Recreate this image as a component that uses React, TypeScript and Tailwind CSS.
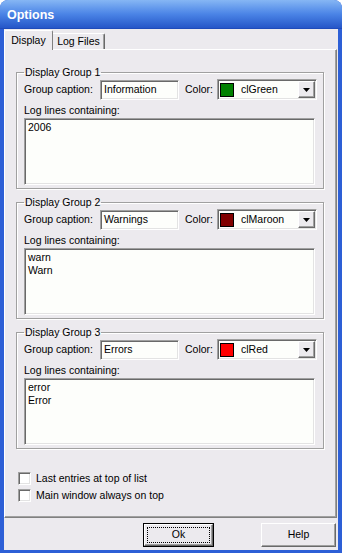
const groups = [
    { n: 1, caption: 'Information', swatch: 'bg-[#008000]', colorName: 'clGreen', lines: ['2006'] },
    { n: 2, caption: 'Warnings', swatch: 'bg-[#800000]', colorName: 'clMaroon', lines: ['warn', 'Warn'] },
    { n: 3, caption: 'Errors', swatch: 'bg-[#FF0000]', colorName: 'clRed', lines: ['error', 'Error'] },
];

const sunken = 'border border-t-[#A0A0A0] border-l-[#A0A0A0] border-r-white border-b-white shadow-[inset_1px_1px_0_#696969,inset_-1px_-1px_0_#E3E3E3] bg-[#FDFEFB]';
const raised = 'border border-t-white border-l-white border-r-[#696969] border-b-[#696969] shadow-[inset_-1px_-1px_0_#A0A0A0]';

const Group = ({ g }: { g: typeof groups[number] }) => {
    return (
        <fieldset className={`ml-[11px] w-[308px] border border-[#A0A0A0] shadow-[inset_1px_1px_0_#fff,1px_1px_0_#fff] pl-[7px] pb-[3px] ${g.n > 1 ? 'mt-[6px]' : ''}`}>
            <legend className="px-[1px] leading-[14px]">Display Group {g.n}</legend>

            <div className="flex items-center h-[21px]">
                <span className="w-[76px]">Group caption:</span>
                <div className={`w-[79px] h-[20px] flex items-center pl-[3px] ${sunken}`}>
                    {g.caption}
                </div>
                <span className="ml-[6px] w-[32px]">Color:</span>
                <div className={`w-[100px] h-[21px] flex items-center ${sunken}`}>
                    <span className={`ml-[2px] w-[14px] h-[14px] border border-black ${g.swatch}`} />
                    <span className="ml-[7px] flex-1">{g.colorName}</span>
                    <div className={`w-[17px] h-[17px] mr-[1px] flex items-center justify-center bg-[#ECEAEE] ${raised}`}>
                        <svg width="7" height="4" viewBox="0 0 7 4">
                            <path d="M0 0H7L3.5 4Z" fill="#000" />
                        </svg>
                    </div>
                </div>
            </div>

            <div className="mt-[4px] leading-[13px]">Log lines containing:</div>
            <div className={`mt-[1px] w-[291px] h-[67px] pl-[3px] pt-[2px] leading-[13px] ${sunken}`}>
                {g.lines.map((l) => (
                    <div key={l}>{l}</div>
                ))}
            </div>
        </fieldset>
    );
};

const Check = ({ label }: { label: string }) => {
    return (
        <div className="flex items-center h-[17px] ml-[13px]">
            <span className={`w-[13px] h-[13px] ${sunken} bg-white`} />
            <span className="ml-[5px]">{label}</span>
        </div>
    );
};

const App = () => {
    return (
        <div className="w-[342px] h-[553px] bg-white font-['Liberation_Sans',Arial,sans-serif] text-[10.5px] text-black">
            <div className="w-full h-full flex flex-col bg-[#2D5FD6] rounded-t-[8px] overflow-hidden">
                {/* title bar */}
                <div className="h-[29px] shrink-0 flex items-center pl-[7px] pt-[3px] bg-gradient-to-b from-[#86B6F4] via-[#4B84E6] to-[#2656C8] border-b border-[#1F4BBA]">
                    <span className="text-white font-bold text-[12.5px]">Options</span>
                </div>

                <div className="flex-1 flex flex-col ml-[4px] mr-[4px] mb-[3px] bg-[#ECEAEE]">
                    {/* tabs */}
                    <div className="h-[21px] shrink-0 flex items-end">
                        <div className="relative z-10 w-[49px] h-[20px] flex items-center justify-center bg-[#ECEAEE] border-t border-l border-r border-t-white border-l-white border-r-[#808080] rounded-t-[2px]">
                            Display
                        </div>
                        <div className="w-[52px] h-[16px] mb-[1px] flex items-center justify-center border-t border-r border-t-white border-r-[#696969] shadow-[inset_-1px_0_0_#A0A0A0] rounded-tr-[2px]">
                            Log Files
                        </div>
                    </div>

                    {/* tab page */}
                    <div className="-mt-[1px] h-[469px] shrink-0 flex flex-col border-t border-l border-r border-b border-t-white border-l-white border-r-[#808080] border-b-[#808080] shadow-[inset_-1px_-1px_0_#A0A0A0] mr-[1px] pt-[15px]">
                        {groups.map((g) => (
                            <Group key={g.n} g={g} />
                        ))}
                        <div className="mt-[21px]">
                            <Check label="Last entries at top of list" />
                            <Check label="Main window always on top" />
                        </div>
                    </div>

                    {/* buttons */}
                    <div className="flex justify-end mt-[5px]">
                        <div className="w-[71px] h-[24px] border border-black flex">
                            <div className={`flex-1 flex ${raised}`}>
                                <div className="flex-1 m-[2px] border border-dotted border-black flex items-center justify-center">
                                    Ok
                                </div>
                            </div>
                        </div>
                        <div className={`ml-[47px] mr-[2px] w-[75px] h-[24px] flex items-center justify-center ${raised}`}>
                            Help
                        </div>
                    </div>
                </div>
            </div>
        </div>
    )
}

export default App;
